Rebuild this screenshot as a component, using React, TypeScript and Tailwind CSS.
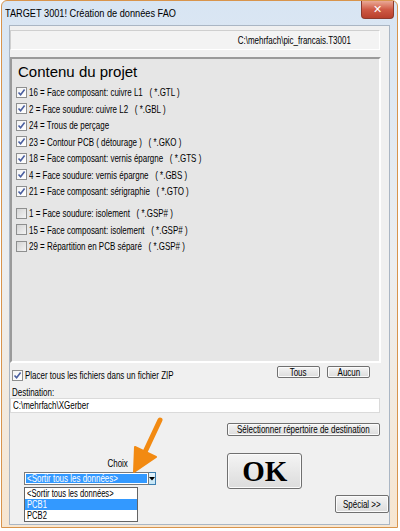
import React from "react";

type Layer = { id: number; label: string; ext: string; checked: boolean };

const layers: Layer[] = [
  { id: 16, label: "Face composant: cuivre L1", ext: "( *.GTL )", checked: true },
  { id: 2, label: "Face soudure: cuivre L2", ext: "( *.GBL )", checked: true },
  { id: 24, label: "Trous de perçage", ext: "", checked: true },
  { id: 23, label: "Contour PCB ( détourage )", ext: "( *.GKO )", checked: true },
  { id: 18, label: "Face composant: vernis épargne", ext: "( *.GTS )", checked: true },
  { id: 4, label: "Face soudure: vernis épargne", ext: "( *.GBS )", checked: true },
  { id: 21, label: "Face composant: sérigraphie", ext: "( *.GTO )", checked: true },
];

const extra: Layer[] = [
  { id: 1, label: "Face soudure: isolement", ext: "( *.GSP# )", checked: false },
  { id: 15, label: "Face composant: isolement", ext: "( *.GSP# )", checked: false },
  { id: 29, label: "Répartition en PCB séparé", ext: "( *.GSP# )", checked: false },
];

// the old dialog font is tall and narrow: squeeze Liberation Sans horizontally
function T({ children, className = "", origin = "origin-left" }: { children: React.ReactNode; className?: string; origin?: string }) {
  return (
    <span
      className={`inline-block scale-x-[0.76] whitespace-pre font-['Liberation_Sans',Arial,sans-serif] text-[10.5px] leading-none ${origin} ${className}`}
    >
      {children}
    </span>
  );
}

function Check({ checked }: { checked: boolean }) {
  return (
    <span
      className={
        "grid size-[11px] shrink-0 place-items-center border border-[#8e8f8f] " +
        (checked ? "bg-gradient-to-br from-[#f4f4f4] to-white" : "bg-gradient-to-br from-[#d4d4d4] to-[#f4f4f4]")
      }
    >
      {checked ? (
        <svg width="9" height="9" viewBox="0 0 9 9">
          <path d="M1.5 4.5 L3.6 6.8 L7.6 1.6" fill="none" stroke="#4a5fa0" strokeWidth="1.6" />
        </svg>
      ) : null}
    </span>
  );
}

function Row({ l }: { l: Layer }) {
  return (
    <div className="flex h-[16.5px] items-center gap-[2px] pl-[4px]">
      <Check checked={l.checked} />
      <T className="text-black">{`${l.id} = ${l.label}${l.ext ? "   " + l.ext : ""}`}</T>
    </div>
  );
}

function Btn({ children, className }: { children: React.ReactNode; className: string }) {
  return (
    <div
      className={
        "flex items-center justify-center rounded-[2px] border border-[#707070] bg-gradient-to-b from-[#f4f4f4] to-[#dcdcdc] shadow-[inset_0_0_0_1px_#fbfbfb] " +
        className
      }
    >
      {children}
    </div>
  );
}

export default function App() {
  return (
    <div className="relative h-[531px] w-[400px] overflow-hidden bg-white">
      <div className="ml-[1px] flex h-[528px] w-[397px] flex-col rounded-t-[6px] border border-[#d8944c] bg-gradient-to-b from-[#d8e5f3] via-[#eceef0] to-[#f7e6d1]">
        {/* title bar */}
        <div className="flex h-[24px] shrink-0 items-start">
          <span className="mt-[5px] ml-[3px] inline-block origin-left scale-x-[0.8] whitespace-pre font-['Liberation_Sans',Arial,sans-serif] text-[11.5px] leading-[14px] text-black">
            TARGET 3001! Création de données FAO
          </span>
          <div className="mr-[3px] ml-auto grid h-[18px] w-[33px] place-items-center rounded-b-[4px] border border-t-0 border-[#8d3a2c] bg-gradient-to-b from-[#e9a896] via-[#cf5a45] to-[#b8402c]">
            <span className="font-['DejaVu_Sans',sans-serif] text-[11px] leading-none font-bold text-white">✕</span>
          </div>
        </div>

        {/* client */}
        <div className="mx-[7px] mb-[2px] flex h-[500px] flex-col border border-[#aab6c4] bg-[#f0f0f0]">
          <div className="mt-[4px] flex h-[20px] w-[370px] items-center justify-end border border-[#cfcfcf] border-r-white border-b-white bg-[#f3f3f3] pr-[28px]">
            <T origin="origin-right" className="text-black">C:\mehrfach\pic_francais.T3001</T>
          </div>

          <div className="mt-[7px] flex h-[306px] w-[371px] flex-col border-2 border-t-[#9a9a9a] border-l-[#9a9a9a] border-r-white border-b-white bg-[#e6e6e6]">
            <div className="flex h-[25px] shrink-0 items-center pl-[6px]">
              <span className="font-['Liberation_Sans',Arial,sans-serif] text-[15px] leading-none text-black">
                Contenu du projet
              </span>
            </div>
            {layers.map((l) => (
              <Row key={l.id} l={l} />
            ))}
            <div className="mt-[5.5px]">
              {extra.map((l) => (
                <Row key={l.id} l={l} />
              ))}
            </div>
          </div>

          <div className="mt-[3px] flex h-[16px] w-[371px] items-start pr-[11px]">
            <div className="mt-[4px] flex items-center gap-[2px] pl-[2px]">
              <Check checked />
              <T className="text-black">Placer tous les fichiers dans un fichier ZIP</T>
            </div>
            <div className="ml-auto flex gap-[7px]">
              <Btn className="h-[12px] w-[43px]">
                <T origin="origin-center">Tous</T>
              </Btn>
              <Btn className="h-[12px] w-[43px]">
                <T origin="origin-center">Aucun</T>
              </Btn>
            </div>
          </div>

          <div className="mt-[4px] flex h-[12px] items-center pl-[2px]">
            <T className="text-black">Destination:</T>
          </div>
          <div className="flex h-[15px] w-[370px] items-center border border-[#dadada] bg-white pl-[2px]">
            <T className="text-black">C:\mehrfach\XGerber</T>
          </div>

          <div className="mt-[10px] flex w-[371px] justify-end pr-[1px]">
            <Btn className="h-[13px] w-[153px]">
              <T origin="origin-center">Sélectionner répertoire de destination</T>
            </Btn>
          </div>

          {/* bottom area */}
          <div className="flex h-[88px] items-start">
            <div className="relative mt-[21px] ml-[14px] flex w-[114px] flex-col">
              <div className="flex h-[12px] items-center justify-end pr-[10px]">
                <T origin="origin-right" className="text-black">Choix</T>
              </div>
              <div className="mt-[3px] flex h-[13px]">
                <div className="flex flex-1 items-center border border-[#7a7a7a] bg-white p-[1px]">
                  <div className="flex h-full w-full items-center bg-[#3399ff] pl-[1px]">
                    <T className="text-white">&lt;Sortir tous les données&gt;</T>
                  </div>
                </div>
                <div className="grid w-[11px] place-items-center border border-l-0 border-[#3c7fb1] bg-gradient-to-b from-[#e5f4fc] to-[#c4e5f6]">
                  <svg width="6" height="4" viewBox="0 0 6 4">
                    <path d="M0 0 H6 L3 3.5 Z" fill="#000" />
                  </svg>
                </div>
              </div>
              <div className="absolute top-[30px] left-0 z-10 flex h-[35px] w-[114px] flex-col border border-[#646464] bg-white">
                <div className="flex h-[11px] items-center pl-[2px]">
                  <T className="text-[10px] text-black">&lt;Sortir tous les données&gt;</T>
                </div>
                <div className="flex h-[11px] items-center bg-[#3399ff] pl-[2px]">
                  <T className="text-[10px] text-white">PCB1</T>
                </div>
                <div className="flex h-[11px] items-center pl-[2px]">
                  <T className="text-[10px] text-black">PCB2</T>
                </div>
              </div>
            </div>

            <Btn className="mt-[17px] ml-[89px] h-[36px] w-[76px] rounded-[3px]">
              <span className="font-['Liberation_Serif','Times_New_Roman',serif] text-[29px] leading-none font-bold text-black">
                OK
              </span>
            </Btn>

            <Btn className="mt-[59px] ml-[33px] h-[18px] w-[54px]">
              <T origin="origin-center">Spécial &gt;&gt;</T>
            </Btn>
          </div>
        </div>
      </div>

      {/* annotation arrow and mouse pointer */}
      <svg className="pointer-events-none absolute top-0 left-0" width="400" height="531" viewBox="0 0 400 531">
        <path d="M160 420 L145 452" stroke="#f28a12" strokeWidth="5" strokeLinecap="round" />
        <path d="M134 472 L135 447 L156 457 Z" fill="#f28a12" stroke="#f28a12" strokeWidth="2" strokeLinejoin="round" />
        <path
          d="M104.5 500.5 L104.5 514 L107.5 511 L110 516.5 L112 515.5 L109.5 510.5 L113.5 510.5 Z"
          fill="#fff"
          stroke="#000"
          strokeWidth="1"
          strokeLinejoin="round"
        />
      </svg>
    </div>
  );
}
